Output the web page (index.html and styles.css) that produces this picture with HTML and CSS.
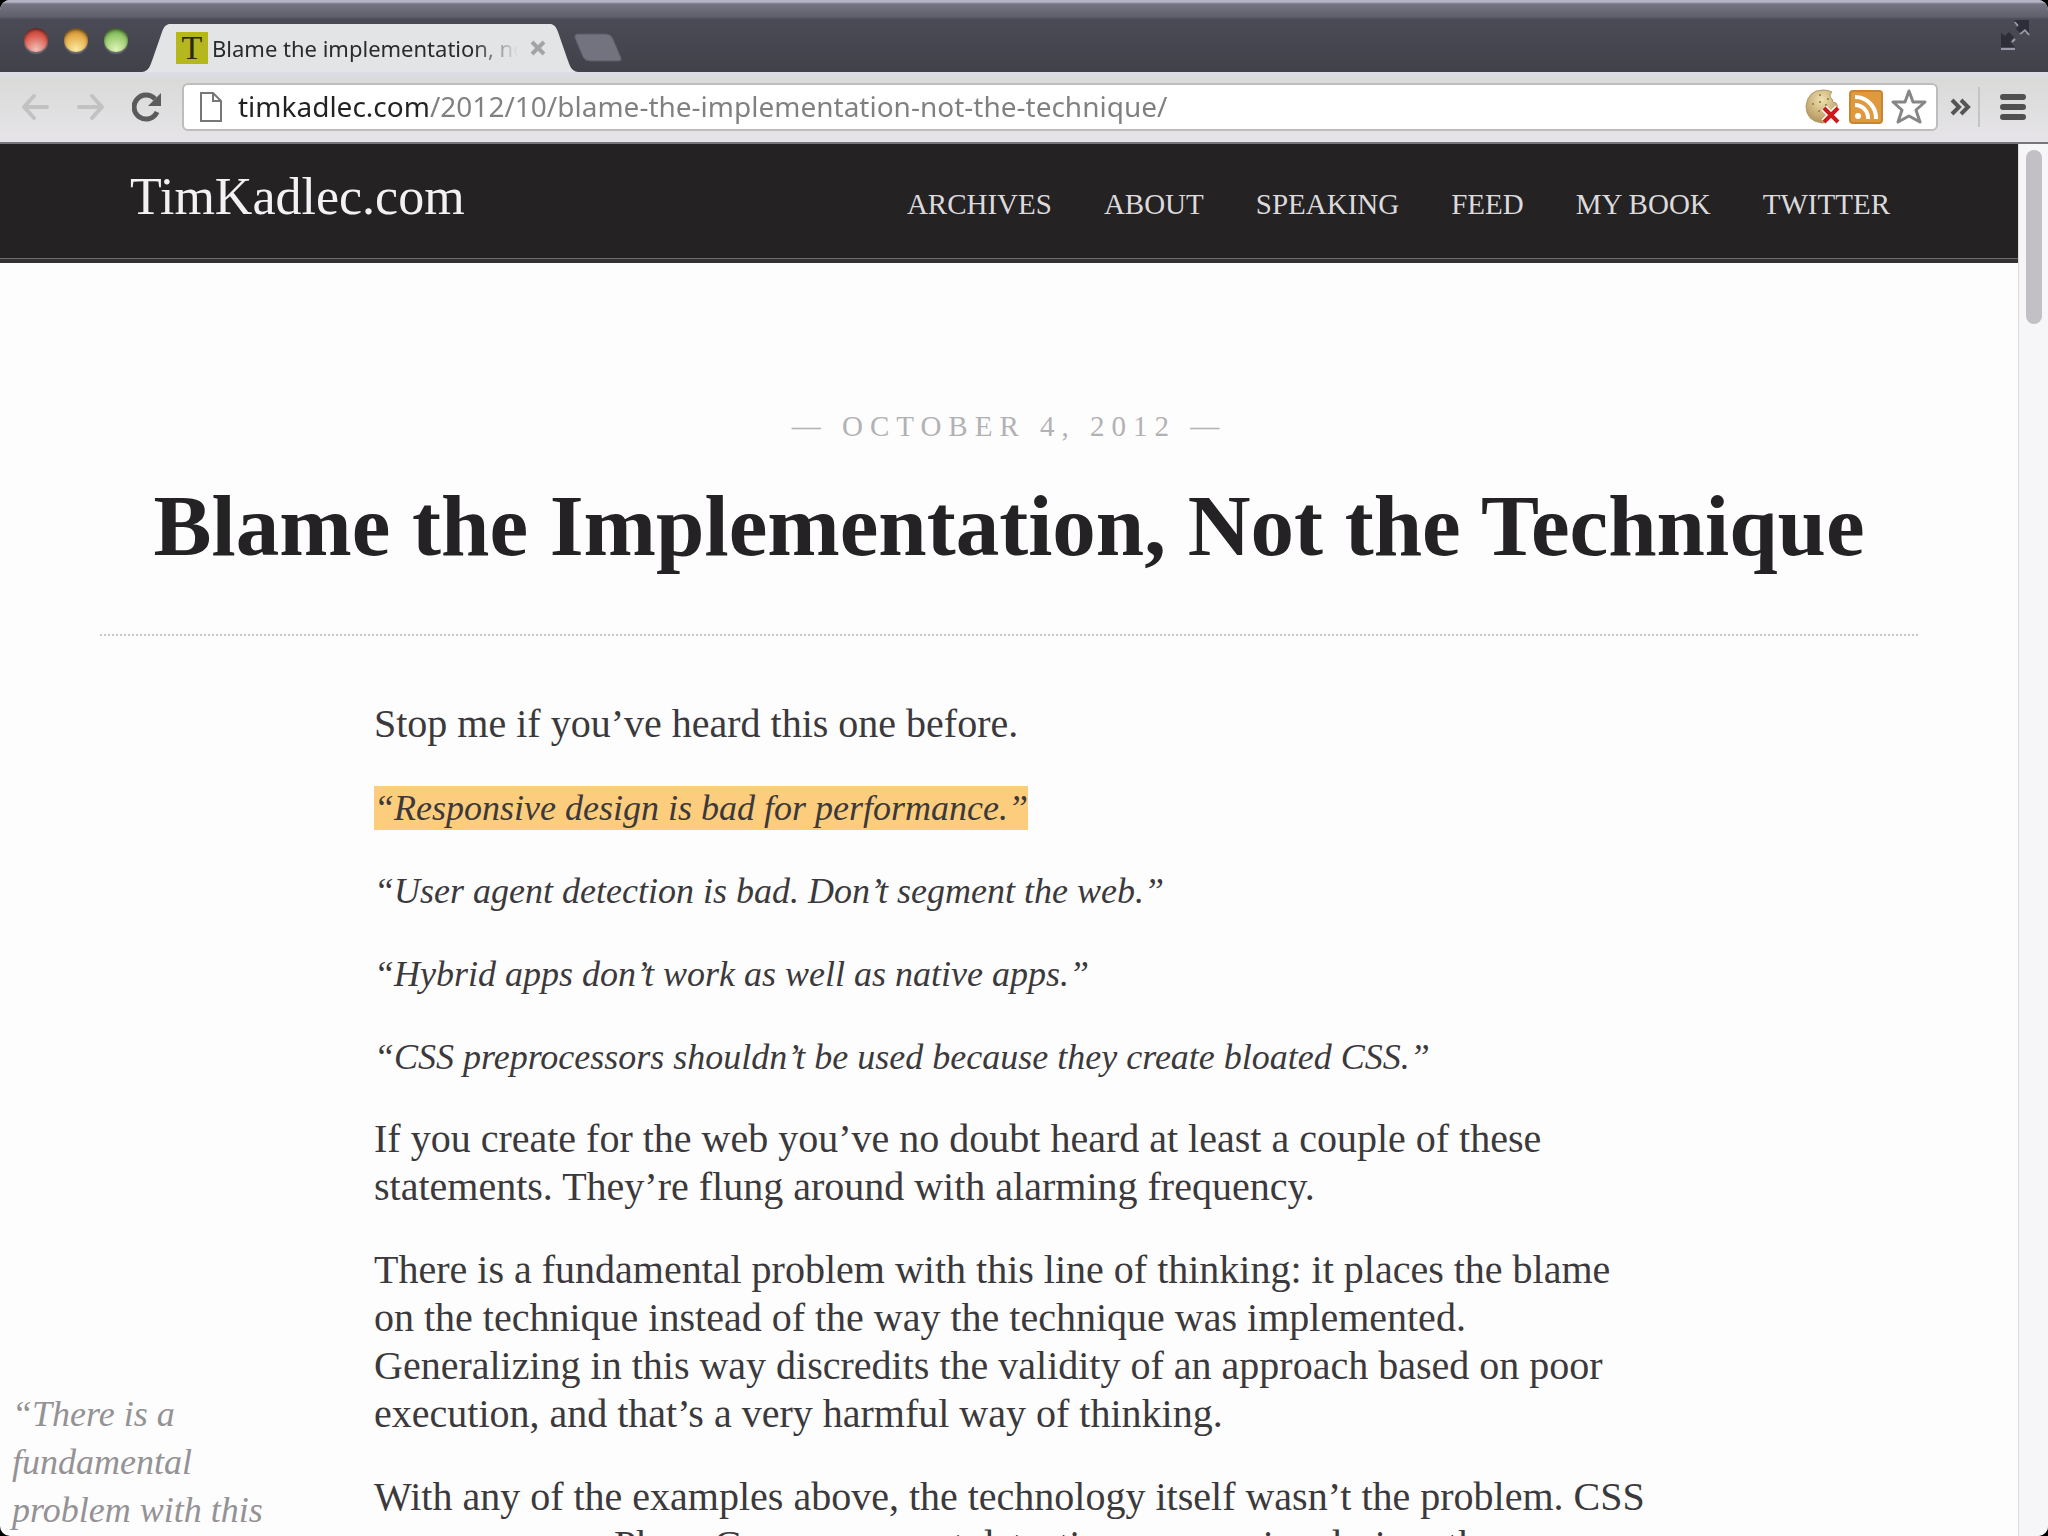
FILE: index.html
```html
<!DOCTYPE html>
<html lang="en">
<head>
  <meta charset="utf-8">
  <title>Blame the implementation, not the technique</title>
  <meta name="viewport" content="width=device-width, initial-scale=1.0">
  <link rel="stylesheet" href="styles.css">
</head>
<body>

<div class="window">

  <div class="titlebar">
    <div class="lights">
      <button class="light red" aria-label="Close window"></button>
      <button class="light yellow" aria-label="Minimize window"></button>
      <button class="light green" aria-label="Zoom window"></button>
    </div>

    <div class="tab">
      <svg class="tab-edge" width="28" height="48" viewBox="0 0 28 48" aria-hidden="true"><path d="M0 48 C7 47 8 42 11 34 L20 8 C22 2 25 0 28 0 V48 Z"/></svg>
      <div class="tab-body">
        <span class="favicon">T</span>
        <span class="tab-title">Blame the implementation, not the technique</span>
        <button class="tab-close" aria-label="Close tab">
          <svg width="16" height="16" viewBox="0 0 16 16"><path d="M2 2 L14 14 M14 2 L2 14" stroke="#a4a4a6" stroke-width="4"/></svg>
        </button>
      </div>
      <svg class="tab-edge" width="28" height="48" viewBox="0 0 28 48" aria-hidden="true"><path d="M28 48 C21 47 20 42 17 34 L8 8 C6 2 3 0 0 0 V48 Z"/></svg>
    </div>

    <button class="new-tab" aria-label="New tab">
      <svg width="50" height="30" viewBox="0 0 50 30"><path d="M5 1 H32 Q38 1 40 6 L48 25 Q49 28 45 28 H17 Q12 28 10 24 L2 5 Q1 1 5 1 Z" fill="#73737f" stroke="#5c5c68"/></svg>
    </button>

    <button class="fullscreen" aria-label="Full screen">
      <svg width="30" height="32" viewBox="0 0 30 32">
        <path d="M1 30 H15 M15 3 L18 7 M20 15 L25 11 L29 16 M12 23 L15 20" stroke="#9a9aa8" stroke-width="2" fill="none"/>
        <path d="M14 1 H29 V14 L25 10 L20 14 L16 10 L19 6 Z M1 14 L5 17 L9 13 L14 18 L10 23 L15 28 H1 Z" fill="#2e2e3a"/>
      </svg>
    </button>
  </div>

  <div class="toolbar">
    <button aria-label="Back">
      <svg width="30" height="28" viewBox="0 0 30 28"><path d="M14 3 L4 14 L14 25 M4 14 H27" fill="none" stroke="#c2c2c2" stroke-width="4" stroke-linecap="round" stroke-linejoin="round"/></svg>
    </button>
    <button aria-label="Forward">
      <svg width="30" height="28" viewBox="0 0 30 28"><path d="M16 3 L26 14 L16 25 M26 14 H3" fill="none" stroke="#c2c2c2" stroke-width="4" stroke-linecap="round" stroke-linejoin="round"/></svg>
    </button>
    <button aria-label="Reload">
      <svg width="30" height="30" viewBox="0 0 30 30"><path d="M25 20 A12 12 0 1 1 23 7" fill="none" stroke="#5b5b5b" stroke-width="5"/><path d="M29 1 V14 H16 Z" fill="#5b5b5b"/></svg>
    </button>

    <div class="omnibox">
      <svg width="22" height="30" viewBox="0 0 22 30" aria-hidden="true"><path d="M1 1 H13 L21 9 V29 H1 Z M13 1 V9 H21" fill="#fff" stroke="#777" stroke-width="2"/></svg>
      <input class="url" type="text" aria-label="Address" value="timkadlec.com/2012/10/blame-the-implementation-not-the-technique/">
      <button aria-label="Cookies blocked">
        <svg width="36" height="36" viewBox="0 0 36 36">
          <defs><radialGradient id="cookie" cx="0.5" cy="0.3" r="0.7"><stop offset="0" stop-color="#f0e2b0"/><stop offset="1" stop-color="#b3935a"/></radialGradient></defs>
          <path d="M27 3 Q23 7 27 10 Q27 14 31 14 Q33 16 32 20 Q28 34 17 34 Q1 32 1 17 Q3 1 18 1 Q24 1 27 3 Z" fill="url(#cookie)" stroke="#b09a6a"/>
          <path d="M14 6 h2 M22 10 h2 M14 13 h2 M13 22 h2 M20 16 h2 M7 15 h2" stroke="#a28a4e" stroke-width="2"/>
          <path d="M19 19 L33 33 M33 19 L19 33" stroke="#fff" stroke-width="7"/>
          <path d="M19 19 L33 33 M33 19 L19 33" stroke="#cc1a1a" stroke-width="4"/>
        </svg>
      </button>
      <button aria-label="Feed">
        <svg width="34" height="34" viewBox="0 0 34 34">
          <rect x="1" y="1" width="32" height="32" rx="3" fill="#e09a3e" stroke="#c98532" stroke-width="2"/>
          <circle cx="9" cy="26" r="3" fill="#fff"/>
          <path d="M6 15 A13 13 0 0 1 19 29 M6 7 A21 21 0 0 1 27 29" fill="none" stroke="#fff" stroke-width="4"/>
        </svg>
      </button>
      <button aria-label="Bookmark">
        <svg width="36" height="36" viewBox="0 0 36 36"><path d="M18 2 L22 13 L34 13 L25 21 L29 33 L18 27 L7 33 L11 21 L2 13 L14 13 Z" fill="#fff" stroke="#868686" stroke-width="3" stroke-linejoin="round"/></svg>
      </button>
    </div>

    <button class="more" aria-label="More extensions">
      <svg width="22" height="18" viewBox="0 0 22 18"><path d="M2 2 L9 9 L2 16 M11 2 L18 9 L11 16" fill="none" stroke="#555" stroke-width="4"/></svg>
    </button>
    <button class="menu" aria-label="Menu">
      <svg width="26" height="28" viewBox="0 0 26 28"><path d="M3 4 H23 M3 14 H23 M3 24 H23" stroke="#505050" stroke-width="6" stroke-linecap="round"/></svg>
    </button>
  </div>

  <div class="viewport">
    <div class="page">

      <header class="site-header">
        <a class="logo" href="#">TimKadlec.com</a>
        <nav>
          <a href="#">ARCHIVES</a>
          <a href="#">ABOUT</a>
          <a href="#">SPEAKING</a>
          <a href="#">FEED</a>
          <a href="#">MY BOOK</a>
          <a href="#">TWITTER</a>
        </nav>
      </header>

      <article>
        <div class="post-head">
          <p class="date">— OCTOBER 4, 2012 —</p>
          <h1>Blame the Implementation, Not the Technique</h1>
        </div>

        <div class="post-body">
          <p>Stop me if you’ve heard this one before.</p>
          <p><em><mark>“Responsive design is bad for performance.”</mark></em></p>
          <p><em>“User agent detection is bad. Don’t segment the web.”</em></p>
          <p><em>“Hybrid apps don’t work as well as native apps.”</em></p>
          <p><em>“CSS preprocessors shouldn’t be used because they create bloated CSS.”</em></p>
          <p>If you create for the web you’ve no doubt heard at least a couple of these statements. They’re flung around with alarming frequency.</p>
          <p>There is a fundamental problem with this line of thinking: it places the blame on the technique instead of the way the technique was implemented. Generalizing in this way discredits the validity of an approach based on poor execution, and that’s a very harmful way of thinking.</p>
          <aside class="pullquote">“There is a fundamental problem with this</aside>
          <p>With any of the examples above, the technology itself wasn’t the problem. CSS preprocessors, PhoneGap, user agent detection, responsive design: the</p>
        </div>
      </article>

    </div>
    <div class="scrollbar"><div class="thumb"></div></div>
  </div>

</div>

</body>
</html>
```

FILE: styles.css
```css
* {
  box-sizing: border-box;
}

body {
  margin: 0;
  background: #000;
  font-family: "Liberation Serif", "Times New Roman", serif;
  color: #3b393b;
}

button {
  display: flex;
  flex: none;
  padding: 0;
  border: 0;
  background: none;
}

a {
  text-decoration: none;
}

.window {
  display: flex;
  flex-direction: column;
  height: 100vh;
  overflow: hidden;
  border-radius: 10px;
  background: #fdfdfd;
}

/* title bar */
.titlebar {
  display: flex;
  flex: none;
  align-items: flex-end;
  height: 72px;
  padding: 0 18px 0 24px;
  background: linear-gradient(#b4b4c6 0, #b4b4c6 2px, #747484 4px, #5f5f6b 17px, #4b4b57 19px, #41414a 100%);
}

.lights {
  display: flex;
  gap: 16px;
  margin-bottom: 20px;
}

.light {
  width: 24px;
  height: 24px;
  border-radius: 50%;
  box-shadow: inset 0 2px 3px rgba(0, 0, 0, 0.5), 0 2px 1px rgba(255, 255, 255, 0.2);
}

.red {
  background: radial-gradient(circle at 50% 90%, #f3c0b8, #d9584c 60%, #a8382f);
}

.yellow {
  background: radial-gradient(circle at 50% 90%, #fbeaa0, #e3a845 60%, #a87428);
}

.green {
  background: radial-gradient(circle at 50% 90%, #e0f5b8, #92c768 60%, #5c8c3c);
}

.tab {
  display: flex;
  margin-left: 14px;
}

.tab-edge {
  display: block;
  fill: #e3e4e6;
}

.tab-body {
  display: flex;
  align-items: center;
  width: 380px;
  height: 48px;
  padding: 0 4px 0 6px;
  background: #e3e4e6;
}

.favicon {
  flex: none;
  width: 32px;
  height: 32px;
  margin-right: 4px;
  background: #b6b61e;
  color: #2a2a10;
  font-size: 34px;
  line-height: 32px;
  text-align: center;
}

.tab-title {
  flex: 1;
  overflow: hidden;
  font-family: "Noto Sans", sans-serif;
  font-size: 22px;
  line-height: 32px;
  white-space: nowrap;
  color: #2a2a2c;
  -webkit-mask-image: linear-gradient(to right, #000 85%, transparent);
  mask-image: linear-gradient(to right, #000 85%, transparent);
}

.tab-close {
  margin-left: 12px;
}

.new-tab {
  margin: 0 0 9px -5px;
}

.fullscreen {
  margin: 0 0 21px auto;
}

/* toolbar */
.toolbar {
  display: flex;
  flex: none;
  align-items: center;
  gap: 26px;
  height: 72px;
  padding: 0 22px 0 20px;
  border-bottom: 2px solid #77757a;
  background: linear-gradient(#dcdcea 0, #dadad9 8px, #e6e4e8 100%);
}

.omnibox {
  display: flex;
  flex: 1;
  align-items: center;
  gap: 8px;
  height: 48px;
  margin-left: -6px;
  padding: 0 9px 0 16px;
  border: 2px solid #bdbdbd;
  border-radius: 6px;
  background: #fff;
}

.url {
  flex: 1;
  min-width: 0;
  height: 40px;
  padding: 0 0 2px 8px;
  border: 0;
  outline: none;
  font-family: "Noto Sans", sans-serif;
  font-size: 28px;
  color: #808080;
  /* host part dark, path grey */
  background: linear-gradient(to right, #222 198px, #808080 198px);
  -webkit-background-clip: text;
  background-clip: text;
  -webkit-text-fill-color: transparent;
}

.more {
  margin-left: -14px;
}

.menu {
  margin-left: -20px;
  padding: 6px 0 6px 20px;
  border-left: 2px solid #c4c4c4;
}

/* page */
.viewport {
  display: flex;
  flex: 1;
  min-height: 0;
}

.page {
  flex: 1;
  overflow: hidden;
}

.scrollbar {
  flex: none;
  width: 30px;
  padding: 6px 6px 0 7px;
  border-left: 1px solid #dcdadd;
  background: #f6f5f7;
}

.thumb {
  height: 174px;
  border-radius: 8px;
  background: #c2c0c4;
}

.site-header {
  display: flex;
  align-items: baseline;
  justify-content: space-between;
  padding: 23px 128px 32px 130px;
  border-bottom: 4px solid #343133;
  background: #242223;
  box-shadow: inset 0 -1px #6e6c6e;
}

.logo {
  font-size: 52px;
  line-height: 60px;
  color: #f3f1f3;
}

nav {
  display: flex;
  gap: 52px;
}

nav a {
  font-size: 29px;
  line-height: 36px;
  color: #dcdadc;
}

.post-head {
  margin: 0 100px;
  padding: 145px 0 56px;
  border-bottom: 2px dotted #c8c6c8;
  text-align: center;
}

.date {
  margin: 0 0 30px;
  font-size: 29px;
  line-height: 36px;
  letter-spacing: 7px;
  color: #b3b1b4;
}

h1 {
  margin: 0;
  font-size: 87px;
  line-height: 104px;
  color: #242225;
}

.post-body {
  max-width: 1652px;
  padding: 64px 0 0 374px;
  font-size: 40px;
  line-height: 48px;
}

.post-body p {
  margin: 0 0 35px;
}

em {
  font-size: 36px;
  line-height: 40px;
}

mark {
  padding: 2px 0;
  background: #fccd7d;
  color: inherit;
}

.pullquote {
  float: left;
  width: 280px;
  margin: -83px 0 0 -362px;
  font-size: 36px;
  font-style: italic;
  color: #949295;
}
```
